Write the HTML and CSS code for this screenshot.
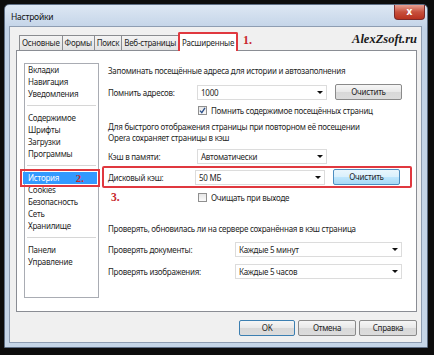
FILE: index.html
```html
<!DOCTYPE html>
<html lang="ru">
<head>
    <meta charset="UTF-8">
    <title>Настройки</title>
    <link rel="stylesheet" href="styles.css">
</head>
<body>
    <div class="window">
        <div class="titlebar">
            <span class="title">Настройки</span>
            <span class="close">x</span>
        </div>
        <div class="client">
            <div class="tabs-row">
                <div class="tabs">
                    <span class="tab">Основные</span>
                    <span class="tab">Формы</span>
                    <span class="tab">Поиск</span>
                    <span class="tab">Веб-страницы</span>
                    <span class="tab active">Расширенные</span>
                </div>
                <span class="mark mark-tab">1.</span>
                <span class="brand">AlexZsoft.ru</span>
            </div>
            <div class="panel">
                <ul class="sidebar">
                    <li>Вкладки</li>
                    <li>Навигация</li>
                    <li>Уведомления</li>
                    <li class="sep"></li>
                    <li>Содержимое</li>
                    <li>Шрифты</li>
                    <li>Загрузки</li>
                    <li>Программы</li>
                    <li class="sep"></li>
                    <li class="selected">История <span class="mark mark-item">2.</span></li>
                    <li>Cookies</li>
                    <li>Безопасность</li>
                    <li>Сеть</li>
                    <li>Хранилище</li>
                    <li class="sep"></li>
                    <li>Панели</li>
                    <li>Управление</li>
                </ul>
                <div class="content">
                    <p class="text first">Запоминать посещённые адреса для истории и автозаполнения</p>
                    <div class="row row-addr">
                        <span class="label">Помнить адресов:</span>
                        <span class="select">1000<i class="arrow"></i></span>
                        <span class="btn">Очистить</span>
                    </div>
                    <div class="row row-check">
                        <span class="label"></span>
                        <span class="check checked"><svg viewBox="0 0 9 9" width="9" height="9"><path d="M2 4.6 L3.8 6.6 L7 1.8" fill="none" stroke="#2a4f8a" stroke-width="1.3"/></svg></span>
                        <span>Помнить содержимое посещённых страниц</span>
                    </div>
                    <p class="text two">Для быстрого отображения страницы при повторном её посещении<br>Opera сохраняет страницы в кэш</p>
                    <div class="row row-mem">
                        <span class="label">Кэш в памяти:</span>
                        <span class="select">Автоматически<i class="arrow"></i></span>
                    </div>
                    <div class="row row-disk">
                        <span class="label">Дисковый кэш:</span>
                        <span class="select">50 МБ<i class="arrow"></i></span>
                        <span class="btn hot">Очистить</span>
                    </div>
                    <div class="row row-check row-exit">
                        <span class="label"><span class="mark mark-row">3.</span></span>
                        <span class="check"></span>
                        <span>Очищать при выходе</span>
                    </div>
                    <p class="text third">Проверять, обновилась ли на сервере сохранённая в кэш страница</p>
                    <div class="row row-docs">
                        <span class="label wide">Проверять документы:</span>
                        <span class="select long">Каждые 5 минут<i class="arrow"></i></span>
                    </div>
                    <div class="row row-imgs">
                        <span class="label wide">Проверять изображения:</span>
                        <span class="select long">Каждые 5 часов<i class="arrow"></i></span>
                    </div>
                </div>
            </div>
            <div class="buttons">
                <span class="btn dlg default">OK</span>
                <span class="btn dlg">Отмена</span>
                <span class="btn dlg">Справка</span>
            </div>
        </div>
    </div>
</body>
</html>
```

FILE: styles.css
```css
body {
    margin: 0;
    background-color: #0d0d0d;
    font-family: "Noto Sans", sans-serif;
    font-size: 8px;
    letter-spacing: -0.25px;
    color: #1f1f1f;
}
.window {
    margin: 4px 6px 0 4px;
    height: 344px;
    box-sizing: border-box;
    border: 1px solid #5f6f85;
    border-radius: 5px 5px 0 0;
    background: linear-gradient(#dde7f3, #c2d3e7 24px, #c6d6e8);
    padding: 0 5px 4px 4px;
    display: flex;
    flex-direction: column;
}
.titlebar {
    height: 22px;
    display: flex;
    justify-content: space-between;
    align-items: flex-start;
    margin-right: -3px;
}
.title {
    margin: 6px 0 0 2px;
    font-size: 8.5px;
    color: #111;
}
.close {
    width: 31px;
    height: 15px;
    line-height: 13px;
    text-align: center;
    color: #fff;
    font-weight: bold;
    font-size: 10px;
    letter-spacing: 0;
    border: 1px solid #7a2a2a;
    border-top: none;
    border-radius: 0 0 4px 4px;
    background: linear-gradient(#e8a093, #c7503d 50%, #b8321f);
    box-sizing: border-box;
}
.client {
    flex: 1;
    background-color: #f0f0f0;
    border: 1px solid #8e9db2;
    padding: 5px 4px 6px 6px;
    display: flex;
    flex-direction: column;
}
.tabs-row {
    height: 18px;
    display: flex;
    align-items: flex-end;
}
.tabs {
    display: flex;
    align-items: flex-end;
    margin-left: 4px;
}
.tab {
    height: 15px;
    line-height: 14px;
    padding: 0 2px;
    border: 1px solid #8a8c90;
    border-bottom: none;
    margin-left: -1px;
    background: linear-gradient(#f4f4f4, #e2e2e2);
    box-sizing: border-box;
    white-space: nowrap;
}
.tab.active {
    height: 19px;
    line-height: 17px;
    background: #fff;
    border: 2px solid #e0383f;
    border-bottom: none;
    border-radius: 2px 2px 0 0;
    padding: 0 2px;
    position: relative;
    top: 1px;
}
.mark {
    font-family: "Liberation Serif", serif;
    font-weight: bold;
    letter-spacing: 0;
    color: #c8262c;
}
.mark-tab {
    font-size: 12px;
    margin: 0 0 2px 5px;
}
.brand {
    margin: 0 0 3px auto;
    font-family: "Liberation Serif", serif;
    font-weight: bold;
    font-style: italic;
    font-size: 12.5px;
    letter-spacing: 0;
    color: #1a1a1a;
}
.panel {
    height: 262px;
    box-sizing: border-box;
    background: #fff;
    border: 1px solid #8a8d94;
    padding: 12px 0 0 7px;
    display: flex;
}
.sidebar {
    list-style: none;
    margin: 0;
    padding: 0 1px;
    width: 75px;
    height: 235px;
    box-sizing: border-box;
    border: 1px solid #a9acb3;
    flex-shrink: 0;
}
.sidebar li {
    height: 12px;
    line-height: 12px;
    padding-left: 2px;
    white-space: nowrap;
}
.sidebar .sep {
    height: 12px;
    position: relative;
}
.sidebar .sep::after {
    content: "";
    position: absolute;
    left: 1px;
    right: 1px;
    top: 5px;
    border-top: 1px solid #d6d6d6;
}
.sidebar .selected {
    background: #3399ff;
    color: #fff;
    outline: 2px solid #e0383f;
    outline-offset: 1px;
    margin-left: -3px;
    padding-left: 5px;
    display: flex;
}
.mark-item {
    font-size: 11px;
    margin: 0 13px 0 auto;
}
.content {
    margin-left: 9px;
    width: 305px;
}
.text {
    margin: 0;
    line-height: 12px;
    white-space: nowrap;
}
.text.first {
    margin-top: 2px;
}
.text.two {
    margin-top: 5px;
    line-height: 11px;
}
.text.third {
    margin-top: 20px;
}
.row {
    display: flex;
    align-items: center;
    white-space: nowrap;
}
.label {
    width: 89px;
    flex-shrink: 0;
}
.label.wide {
    width: 127px;
}
.select {
    width: 130px;
    height: 15px;
    box-sizing: border-box;
    border: 1px solid #dcdcdc;
    background: #fff;
    padding-left: 3px;
    line-height: 13px;
    position: relative;
}
.select.long {
    width: 167px;
}
.arrow {
    position: absolute;
    right: 3px;
    top: 5px;
    border-left: 3px solid transparent;
    border-right: 3px solid transparent;
    border-top: 3px solid #111;
}
.btn {
    width: 67px;
    height: 16px;
    line-height: 14px;
    box-sizing: border-box;
    margin-left: 8px;
    text-align: center;
    border: 1px solid #8a8a8a;
    border-radius: 2px;
    background: linear-gradient(#f6f6f6, #e8e8e8 50%, #d8d8d8 51%, #dcdcdc);
}
.btn.hot {
    border-color: #4d8ec0;
    background: linear-gradient(#eaf6fd, #d9f0fc 50%, #bee6fd 51%, #a7d9f5);
}
.row-addr {
    margin-top: 7px;
}
.row-check {
    margin-top: 4px;
    height: 12px;
}
.check {
    width: 9px;
    height: 9px;
    box-sizing: border-box;
    border: 1px solid #8f8f8f;
    background: linear-gradient(#e6e6e6, #fafafa);
    margin: 0 4px 0 1px;
    display: flex;
}
.check svg {
    margin: -1px;
}
.row-mem {
    margin-top: 6px;
}
.row-disk {
    margin: 2px 0 0 -6px;
    padding: 1px 0 1px 4px;
    border: 2px solid #e0383f;
    border-radius: 2px;
    width: 310px;
    box-sizing: border-box;
}
.row-disk .label {
    width: 87px;
}
.row-exit {
    margin-top: 3px;
}
.mark-row {
    font-size: 11.5px;
    margin-left: 3px;
}
.row-docs {
    margin-top: 7px;
}
.row-imgs {
    margin-top: 7px;
}
.buttons {
    margin-top: 8px;
    display: flex;
    justify-content: flex-end;
    gap: 3px;
}
.btn.dlg {
    margin-left: 0;
    width: 58px;
}
.btn.default {
    width: 56px;
    border-color: #3c7fb1;
}
```
